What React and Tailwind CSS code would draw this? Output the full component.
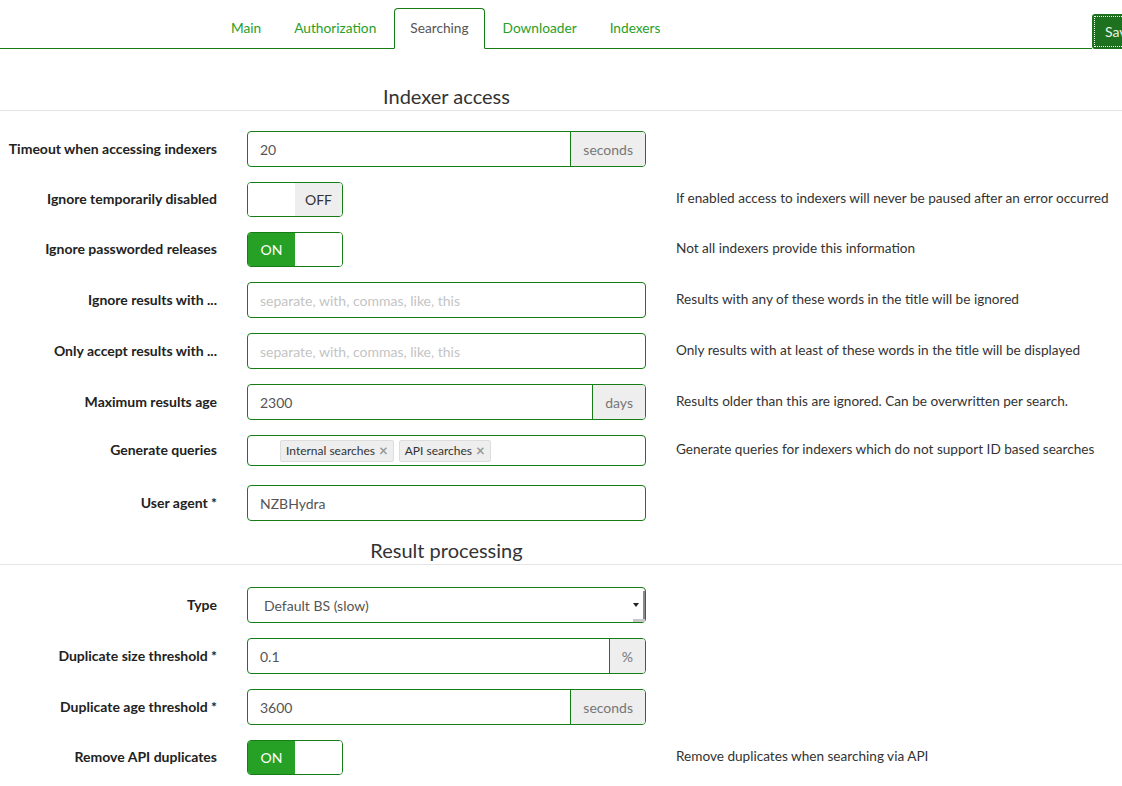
import React from "react";

const FONT = { fontFamily: "Lato, 'Open Sans', sans-serif" };

function Tabs() {
  const tabs = ["Main", "Authorization", "Searching", "Downloader", "Indexers"];
  return (
    <div className="flex items-end w-full">
      <div className="flex-1 flex items-end border-b border-[#157d15] h-[49px] pl-[216px]">
        {tabs.map((t) =>
          t === "Searching" ? (
            <div
              key={t}
              className="mr-[3px] mb-[-1px] h-[41px] px-[15px] flex items-center border border-[#157d15] border-b-white bg-white rounded-t-[4px] text-[#555] text-[13.7px]"
            >
              {t}
            </div>
          ) : (
            <div key={t} className="mr-[3px] h-[40px] px-[15px] flex items-center text-[#28a028] text-[13.7px]">
              {t}
            </div>
          )
        )}
      </div>
      <div className="shrink-0 w-[30px] border-b border-[#157d15] h-[49px]" />
      <div className="shrink-0 w-[66px] mr-[-36px] h-[35px] bg-[#1e711e] rounded-[3px] p-[2px]">
        <div className="h-full border border-dotted border-white flex items-center pl-[10px] text-[#e8f5e8] text-[14px]">
          Save
        </div>
      </div>
    </div>
  );
}

function Heading({ children, top }) {
  return (
    <div className={`border-b border-[#e5e5e5] pb-[2px] ${top}`}>
      <div className="w-[646px] pl-[247px] text-center text-[20px] leading-[24px] text-[#333]">{children}</div>
    </div>
  );
}

function Row({ label, children, help, className = "" }) {
  return (
    <div className={`flex items-center mb-[15px] ${className}`}>
      <div className="w-[217px] text-right font-bold text-[14px] text-[#222] shrink-0 mt-[-2px]">{label}</div>
      <div className="ml-[30px] w-[399px] shrink-0">{children}</div>
      {help && <div className="ml-[30px] text-[13.6px] text-[#333] whitespace-nowrap mt-[-2px]">{help}</div>}
    </div>
  );
}

function TextInput({ value, placeholder, addon }) {
  return (
    <div className="flex h-[36px] border border-[#157d15] rounded-[4px] overflow-hidden">
      <div className="flex-1 flex items-center px-[12px] text-[14px]">
        {value ? <span className="text-[#555]">{value}</span> : <span className="text-[#c4c4c4]">{placeholder}</span>}
      </div>
      {addon && (
        <div className="flex items-center px-[12px] bg-[#eee] border-l border-[#157d15] text-[14px] text-[#777]">
          {addon}
        </div>
      )}
    </div>
  );
}

function Toggle({ on }) {
  return (
    <div className="flex w-[96px] h-[35px] border border-[#157d15] rounded-[4px] overflow-hidden text-[14px]">
      {on ? (
        <>
          <div className="w-[47px] bg-[#26a126] text-white flex items-center justify-center">ON</div>
          <div className="flex-1 bg-white" />
        </>
      ) : (
        <>
          <div className="w-[47px] bg-white" />
          <div className="flex-1 bg-[#eee] text-[#333] flex items-center justify-center">OFF</div>
        </>
      )}
    </div>
  );
}

function Chip({ children }) {
  return (
    <div className="flex items-center h-[22px] px-[5px] bg-[#eee] border border-[#ddd] rounded-[2px] text-[12px] text-[#333]">
      {children}
      <span className="ml-[4px] text-[#999] text-[15px] leading-none font-bold">×</span>
    </div>
  );
}

function Select() {
  return (
    <div className="relative flex items-center h-[36px] border border-[#157d15] rounded-[4px] pl-[16px] text-[14px] text-[#555]">
      Default BS (slow)
      <div className="absolute right-[6px] top-[15px] w-0 h-0 border-l-[3px] border-r-[3px] border-t-[4px] border-l-transparent border-r-transparent border-t-[#222]" />
      <div className="absolute right-0 top-[3px] bottom-0 w-[2px] bg-[#8a8a8a]" />
      <div className="absolute right-0 bottom-0 w-[12px] h-[3px] bg-[#c8c8c8]" />
    </div>
  );
}

export default function App() {
  return (
    <div className="w-[1122px] h-[786px] overflow-hidden bg-white" style={FONT}>
      <Tabs />

      <Heading top="mt-[35px]">Indexer access</Heading>

      <div className="mt-[20px]">
        <Row label="Timeout when accessing indexers">
          <TextInput value="20" addon="seconds" />
        </Row>
        <Row label="Ignore temporarily disabled" help="If enabled access to indexers will never be paused after an error occurred">
          <Toggle on={false} />
        </Row>
        <Row label="Ignore passworded releases" help="Not all indexers provide this information">
          <Toggle on />
        </Row>
        <Row label="Ignore results with ..." help="Results with any of these words in the title will be ignored">
          <TextInput placeholder="separate, with, commas, like, this" />
        </Row>
        <Row label="Only accept results with ..." help="Only results with at least of these words in the title will be displayed">
          <TextInput placeholder="separate, with, commas, like, this" />
        </Row>
        <Row label="Maximum results age" help="Results older than this are ignored. Can be overwritten per search.">
          <TextInput value="2300" addon="days" />
        </Row>
        <Row label="Generate queries" help="Generate queries for indexers which do not support ID based searches" className="mt-[3px]">
          <div className="flex items-center gap-[5px] h-[31px] border border-[#157d15] rounded-[4px] pl-[32px]">
            <Chip>Internal searches</Chip>
            <Chip>API searches</Chip>
          </div>
        </Row>
        <Row label="User agent *" className="mt-[19px]">
          <TextInput value="NZBHydra" />
        </Row>
      </div>

      <Heading top="mt-[17px]">Result processing</Heading>

      <div className="mt-[22px]">
        <Row label="Type">
          <Select />
        </Row>
        <Row label="Duplicate size threshold *">
          <TextInput value="0.1" addon="%" />
        </Row>
        <Row label="Duplicate age threshold *">
          <TextInput value="3600" addon="seconds" />
        </Row>
        <Row label="Remove API duplicates" help="Remove duplicates when searching via API">
          <Toggle on />
        </Row>
      </div>
    </div>
  );
}
